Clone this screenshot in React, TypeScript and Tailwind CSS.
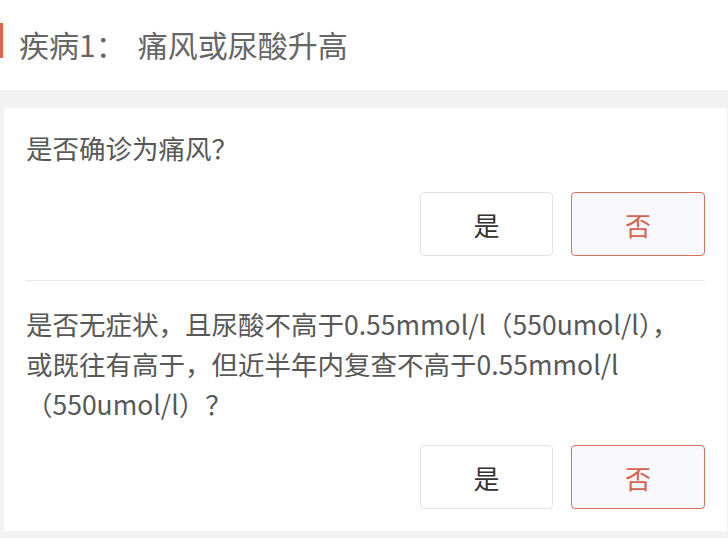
import React from "react";

const FONT = '"Noto Sans CJK SC", "Noto Sans", sans-serif';

function Buttons() {
  return (
    <div className="flex justify-end gap-[18px]">
      <button className="w-[133px] h-[64px] rounded-[4px] border border-[#e3e3e3] bg-white text-[26px] text-[#333333]">
        是
      </button>
      <button className="w-[134px] h-[64px] rounded-[4px] border border-[#d9705f] bg-[#f9f8fc] text-[26px] text-[#d4634f]">
        否
      </button>
    </div>
  );
}

export default function App() {
  return (
    <div className="w-[728px] h-[538px] bg-[#f2f2f2] overflow-hidden" style={{ fontFamily: FONT }}>
      <div className="h-[90px] bg-white flex items-start">
        <div className="w-[3px] h-[35px] mt-[23px] bg-[#e0624a]" />
        <div className="ml-[16px] mt-[24px] leading-[40px] text-[30px] text-[#666666] whitespace-nowrap">
          <span>疾病1：</span>
          <span className="ml-[12px]">痛风或尿酸升高</span>
        </div>
      </div>
      <div className="ml-[4px] mr-[1px] mt-[18px] bg-white pl-[22px] pr-[22px] pt-[20px] pb-[22px]">
        <div className="text-[26.5px] leading-[40px] text-[#585858]">是否确诊为痛风？</div>
        <div className="mt-[24px]">
          <Buttons />
        </div>
        <div className="mt-[24px] h-px bg-[#e6e6e6]" />
        <div className="mt-[23px] text-[26.5px] leading-[40px] text-[#585858] whitespace-nowrap">
          是否无症状，且尿酸不高于0.55mmol/l（550umol/l），
          <br />
          或既往有高于，但近半年内复查不高于0.55mmol/l
          <br />
          （550umol/l）？
        </div>
        <div className="mt-[21px]">
          <Buttons />
        </div>
      </div>
    </div>
  );
}
